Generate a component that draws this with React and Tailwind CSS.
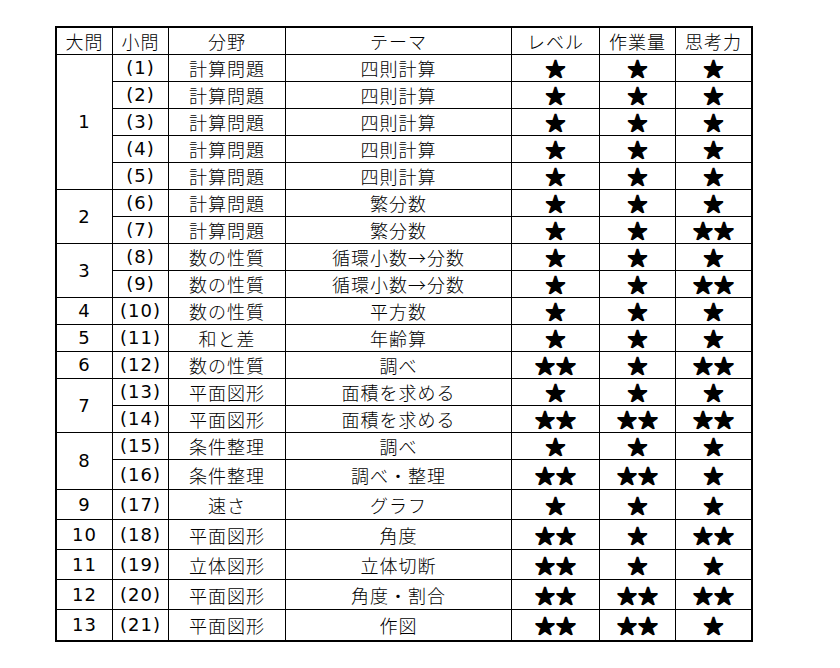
const S1 = "★";
const S2 = "★★";

const groups = [
  {
    big: "1",
    rows: [
      ["(1)", "計算問題", "四則計算", S1, S1, S1],
      ["(2)", "計算問題", "四則計算", S1, S1, S1],
      ["(3)", "計算問題", "四則計算", S1, S1, S1],
      ["(4)", "計算問題", "四則計算", S1, S1, S1],
      ["(5)", "計算問題", "四則計算", S1, S1, S1],
    ],
  },
  {
    big: "2",
    rows: [
      ["(6)", "計算問題", "繁分数", S1, S1, S1],
      ["(7)", "計算問題", "繁分数", S1, S1, S2],
    ],
  },
  {
    big: "3",
    rows: [
      ["(8)", "数の性質", "循環小数→分数", S1, S1, S1],
      ["(9)", "数の性質", "循環小数→分数", S1, S1, S2],
    ],
  },
  { big: "4", rows: [["(10)", "数の性質", "平方数", S1, S1, S1]] },
  { big: "5", rows: [["(11)", "和と差", "年齢算", S1, S1, S1]] },
  { big: "6", rows: [["(12)", "数の性質", "調べ", S2, S1, S2]] },
  {
    big: "7",
    rows: [
      ["(13)", "平面図形", "面積を求める", S1, S1, S1],
      ["(14)", "平面図形", "面積を求める", S2, S2, S2],
    ],
  },
  {
    big: "8",
    rows: [
      ["(15)", "条件整理", "調べ", S1, S1, S1],
      ["(16)", "条件整理", "調べ・整理", S2, S2, S1],
    ],
  },
  { big: "9", rows: [["(17)", "速さ", "グラフ", S1, S1, S1]] },
  { big: "10", rows: [["(18)", "平面図形", "角度", S2, S1, S2]] },
  { big: "11", rows: [["(19)", "立体図形", "立体切断", S2, S1, S1]] },
  { big: "12", rows: [["(20)", "平面図形", "角度・割合", S2, S2, S2]] },
  { big: "13", rows: [["(21)", "平面図形", "作図", S2, S2, S1]] },
];

const headers = ["大問", "小問", "分野", "テーマ", "レベル", "作業量", "思考力"];

export default function App() {
  let idx = 0;
  const total = groups.reduce((n, g) => n + g.rows.length, 0);

  return (
    <div className="min-h-screen bg-white pt-[26px] pl-[55px] text-black font-['Noto_Sans_CJK_JP','Noto_Sans_CJK_SC',sans-serif] font-light">
      <table className="table-fixed border-separate border-spacing-0 border-2 border-black w-[698px] text-[18px] leading-none tracking-[1px]">
        <colgroup>
          <col className="w-[56px]" />
          <col className="w-[56px]" />
          <col className="w-[117px]" />
          <col className="w-[226px]" />
          <col className="w-[88px]" />
          <col className="w-[76px]" />
          <col className="w-[75px]" />
        </colgroup>
        <thead>
          <tr className="h-[27px]">
            {headers.map((h, i) => (
              <th
                key={h}
                className={
                  "p-0 font-light text-center align-middle border-b border-black " +
                  (i < 6 ? "border-r" : "")
                }
              >
                {h}
              </th>
            ))}
          </tr>
        </thead>
        <tbody>
          {groups.map((g) =>
            g.rows.map((r, j) => {
              idx += 1;
              const n = idx;
              const tall = n >= 16;
              const last = n === total;
              const bb = last ? "" : "border-b";
              return (
                <tr key={r[0]} className={tall ? "h-[30px]" : "h-[27px]"}>
                  {j === 0 && (
                    <td
                      rowSpan={g.rows.length}
                      className={
                        "p-0 text-center align-middle border-r border-black font-['DejaVu_Sans',sans-serif] font-normal tracking-[1px] " +
                        bb
                      }
                    >
                      {g.big}
                    </td>
                  )}
                  {r.map((c, k) => {
                    let extra = "";
                    if (k === 0) extra = " font-['DejaVu_Sans',sans-serif] font-normal tracking-[1px]";
                    if (k >= 3)
                      extra =
                        " font-normal text-[18px] tracking-[3px] pl-[3px] [-webkit-text-stroke:2.5px_black]";
                    return (
                      <td
                        key={k}
                        className={
                          "p-0 text-center align-middle border-black whitespace-nowrap " +
                          bb +
                          (k < 5 ? " border-r" : "") +
                          extra
                        }
                      >
                        {c}
                      </td>
                    );
                  })}
                </tr>
              );
            })
          )}
        </tbody>
      </table>
    </div>
  );
}
